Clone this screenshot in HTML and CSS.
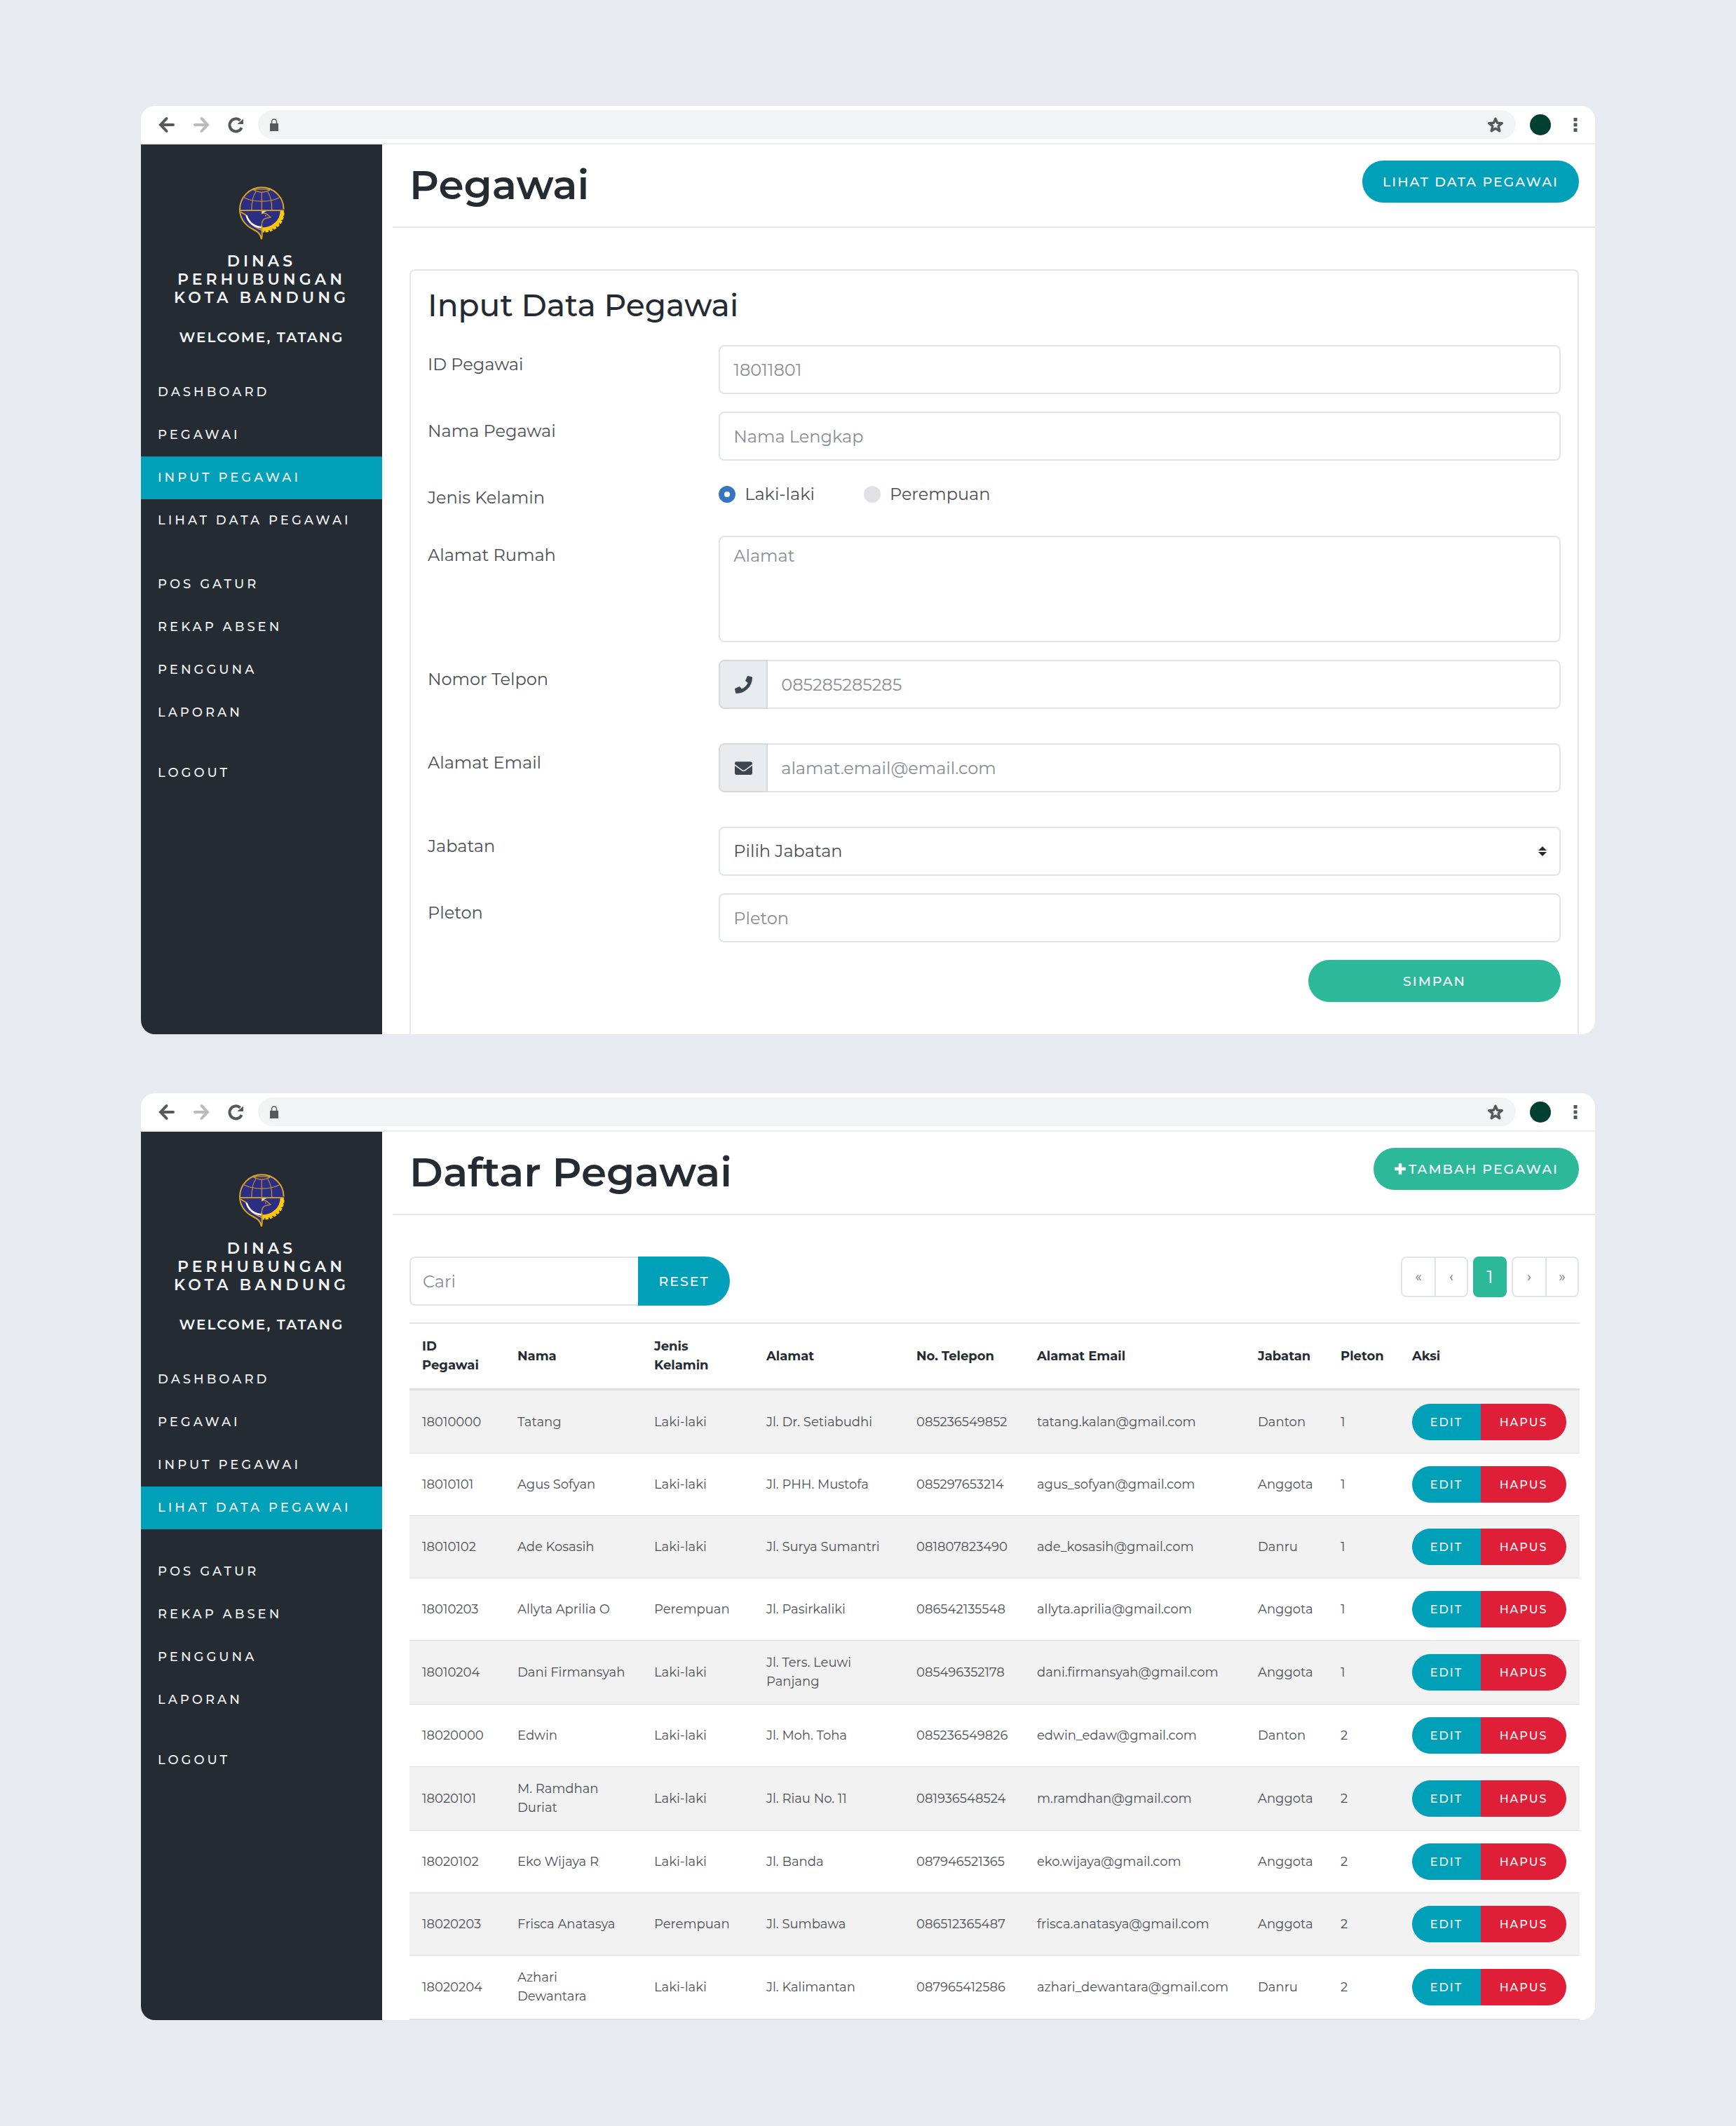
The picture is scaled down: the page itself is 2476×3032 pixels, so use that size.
FILE: index.html
```html
<!DOCTYPE html>
<html lang="id">
<head>
<meta charset="utf-8">
<meta name="viewport" content="width=device-width, initial-scale=1">
<title>Pegawai - Dinas Perhubungan Kota Bandung</title>
<link rel="stylesheet" href="styles.css">
</head>
<body>
<svg class="sprite" aria-hidden="true">
  <symbol id="i-back" viewBox="0 0 24 24"><path d="M21 12H4M11.500 3 3 12l8.500 9" fill="none" stroke="currentColor" stroke-width="4" stroke-linecap="round"/></symbol>
  <symbol id="i-forward" viewBox="0 0 24 24"><path d="M3 12h17M12.500 3 21 12l-8.500 9" fill="none" stroke="currentColor" stroke-width="4" stroke-linecap="round"/></symbol>
  <symbol id="i-reload" viewBox="0 0 24 24"><path d="M20.600 16.200A9 9 0 1 1 18.600 5.800" fill="none" stroke="currentColor" stroke-width="4"/><path d="M23 3.500V11h-8.500z" fill="currentColor"/></symbol>
  <symbol id="i-lock" viewBox="0 0 12 18"><path d="M2.500 8V4.500a3.500 3.500 0 0 1 7 0V8" fill="none" stroke="currentColor" stroke-width="1.500"/><path d="M0 7h12v11H0z" fill="currentColor"/></symbol>
  <symbol id="i-star" viewBox="0 0 24 24"><path d="M12 3.200l2.500 6 6.800.5-5.200 4.200 1.700 6.800-5.800-3.600-5.800 3.600 1.700-6.800L2.700 9.700l6.800-.5z" fill="none" stroke="currentColor" stroke-width="3.400" stroke-linejoin="round"/></symbol>
  <symbol id="i-more" viewBox="0 0 24 24"><path d="M9.500 2h5v5h-5zM9.500 9.500h5v5h-5zM9.500 17h5v5h-5z" fill="currentColor"/></symbol>
  <symbol id="i-phone" viewBox="0 0 512 512"><path fill="currentColor" d="M493.400 24.600l-104-24c-11.300-2.600-22.900 3.300-27.500 13.900l-48 112c-4.200 9.800-1.400 21.300 6.900 28l60.600 49.600c-36 76.700-98.900 140.500-177.200 177.200l-49.600-60.600c-6.800-8.300-18.200-11.100-28-6.900l-112 48C3.900 366.500-2 378.100.6 389.400l24 104C27.100 504.200 36.700 512 48 512c256.100 0 464-207.500 464-464 0-11.200-7.700-20.900-18.600-23.400z"/></symbol>
  <symbol id="i-mail" viewBox="0 0 512 512"><path fill="currentColor" d="M502.300 190.800c3.900-3.100 9.700-.2 9.700 4.700V400c0 26.500-21.500 48-48 48H48c-26.500 0-48-21.500-48-48V195.600c0-5 5.700-7.800 9.700-4.700 22.400 17.400 52.100 39.500 154.100 113.600 21.100 15.400 56.700 47.800 92.200 47.600 35.700.3 72-32.800 92.300-47.600 102-74.100 131.600-96.300 154-113.700zM256 320c23.200.4 56.600-29.200 73.400-41.400 132.700-96.300 142.800-104.700 173.400-128.700 5.800-4.500 9.200-11.500 9.200-18.900v-19c0-26.500-21.500-48-48-48H48c-26.500 0-48 21.500-48 48v19c0 7.400 3.400 14.300 9.200 18.900 30.600 23.900 40.700 32.400 173.400 128.700 16.800 12.200 50.200 41.800 73.400 41.400z"/></symbol>
  <symbol id="i-plus" viewBox="0 0 16 16"><path d="M8 1v14M1 8h14" stroke="currentColor" stroke-width="4" fill="none"/></symbol>
  <symbol id="i-sort" viewBox="0 0 12 16"><path d="M6 1l6 6H0zM6 15l6-6H0z" fill="currentColor"/></symbol>
  <symbol id="logo" viewBox="450 377 195 230">
    <path d="M453 474a94 94 0 0 1 188 0c0 50-40 92-94 92v36c-4-26-18-38-36-46-38-16-58-44-58-82z" fill="#2b2e83"/>
    <path d="M634 480c0 46-38 80-86 80" fill="none" stroke="#fcc80f" stroke-width="16"/>
    <path d="M639 488c-2 46-38 82-88 80" fill="none" stroke="#fcc80f" stroke-width="10" stroke-dasharray="13 5"/>
    <g fill="none" stroke="#c9952f" stroke-width="3.500">
      <path d="M547 401v76M522 399c-12 16-19 44-18 78M572 399c12 16 19 44 18 78M471 424c20 10 47 16 76 16s56-6 76-16M511 391c10 6 22 10 36 10s26-4 36-10c-12-4-60-4-72 0z"/>
    </g>
    <path d="M641 474a94 94 0 0 0-188 0c0 38 22 68 54 84 20 10 34 18 39 44 5-20 1-34 1-60" fill="none" stroke="#daa520" stroke-width="6"/>
    <path d="M453 479h188M458 486l22 13c6 28 26 48 67 64" fill="none" stroke="#daa520" stroke-width="5"/>
    <path d="M482 500c8 30 32 48 65 52" fill="none" stroke="#fff" stroke-width="7"/>
    <path d="M549 482h20c-8 2-14 6-20 10z" fill="#fff"/>
    <path d="M547 480v12c10-2 22 0 28 8l10 8c-6 2-12 2-18 4-14 2-20 12-20 32v20" fill="none" stroke="#c9952f" stroke-width="4"/>
    <circle cx="564" cy="502" r="3" fill="#8f93d8"/>
  </symbol>
</svg>

<section class="window" aria-label="Input Pegawai">
  <div class="chrome">
    <div class="chrome-nav">
      <button type="button" class="icon-btn" aria-label="Kembali"><svg class="icon"><use href="#i-back"/></svg></button>
      <button type="button" class="icon-btn icon-btn-off" aria-label="Maju"><svg class="icon"><use href="#i-forward"/></svg></button>
      <button type="button" class="icon-btn" aria-label="Muat ulang"><svg class="icon"><use href="#i-reload"/></svg></button>
    </div>
    <div class="address">
      <svg class="icon-lock"><use href="#i-lock"/></svg>
      <input class="address-input" type="text" aria-label="Alamat situs">
      <button type="button" class="icon-btn" aria-label="Tandai"><svg class="icon"><use href="#i-star"/></svg></button>
    </div>
    <span class="avatar"></span>
    <button type="button" class="icon-btn" aria-label="Menu"><svg class="icon"><use href="#i-more"/></svg></button>
  </div>
  <div class="app">
    <aside class="sidebar">
      <svg class="logo"><use href="#logo"/></svg>
      <p class="brand">DINAS<br>PERHUBUNGAN<br>KOTA BANDUNG</p>
      <p class="welcome">WELCOME, TATANG</p>
      <nav>
        <ul class="menu">
          <li><a href="#">DASHBOARD</a></li>
          <li><a href="#">PEGAWAI</a></li>
          <li><a href="#" class="active">INPUT PEGAWAI</a></li>
          <li><a href="#">LIHAT DATA PEGAWAI</a></li>
        </ul>
        <ul class="menu">
          <li><a href="#">POS GATUR</a></li>
          <li><a href="#">REKAP ABSEN</a></li>
          <li><a href="#">PENGGUNA</a></li>
          <li><a href="#">LAPORAN</a></li>
        </ul>
        <ul class="menu menu-end">
          <li><a href="#">LOGOUT</a></li>
        </ul>
      </nav>
    </aside>
    <main class="main">
      <header class="page-head">
        <h1>Pegawai</h1>
        <a href="#daftar" class="btn btn-info">LIHAT DATA PEGAWAI</a>
      </header>
      <div class="content">
        <form class="card">
          <h2>Input Data Pegawai</h2>
          <div class="row">
            <label for="id">ID Pegawai</label>
            <input class="field" id="id" type="text" placeholder="18011801">
          </div>
          <div class="row">
            <label for="nama">Nama Pegawai</label>
            <input class="field" id="nama" type="text" placeholder="Nama Lengkap">
          </div>
          <div class="row" role="radiogroup" aria-labelledby="jk">
            <span class="row-label" id="jk">Jenis Kelamin</span>
            <div class="radios">
              <label class="radio"><input type="radio" name="jk" checked>Laki-laki</label>
              <label class="radio"><input type="radio" name="jk">Perempuan</label>
            </div>
          </div>
          <div class="row">
            <label for="alamat">Alamat Rumah</label>
            <textarea class="field field-area" id="alamat" placeholder="Alamat"></textarea>
          </div>
          <div class="row row-group">
            <label for="telp">Nomor Telpon</label>
            <div class="group">
              <span class="addon"><svg class="icon-field"><use href="#i-phone"/></svg></span>
              <input class="field" id="telp" type="tel" placeholder="085285285285">
            </div>
          </div>
          <div class="row row-group">
            <label for="email">Alamat Email</label>
            <div class="group">
              <span class="addon"><svg class="icon-field"><use href="#i-mail"/></svg></span>
              <input class="field" id="email" type="email" placeholder="alamat.email@email.com">
            </div>
          </div>
          <div class="row">
            <label for="jabatan">Jabatan</label>
            <div class="select">
              <select class="field" id="jabatan">
                <option>Pilih Jabatan</option>
                <option>Danton</option>
                <option>Danru</option>
                <option>Anggota</option>
              </select>
              <svg class="icon-sort"><use href="#i-sort"/></svg>
            </div>
          </div>
          <div class="row">
            <label for="pleton">Pleton</label>
            <input class="field" id="pleton" type="text" placeholder="Pleton">
          </div>
          <button type="submit" class="btn btn-success btn-save">SIMPAN</button>
        </form>
      </div>
    </main>
  </div>
</section>

<section class="window" id="daftar" aria-label="Daftar Pegawai">
  <div class="chrome">
    <div class="chrome-nav">
      <button type="button" class="icon-btn" aria-label="Kembali"><svg class="icon"><use href="#i-back"/></svg></button>
      <button type="button" class="icon-btn icon-btn-off" aria-label="Maju"><svg class="icon"><use href="#i-forward"/></svg></button>
      <button type="button" class="icon-btn" aria-label="Muat ulang"><svg class="icon"><use href="#i-reload"/></svg></button>
    </div>
    <div class="address">
      <svg class="icon-lock"><use href="#i-lock"/></svg>
      <input class="address-input" type="text" aria-label="Alamat situs">
      <button type="button" class="icon-btn" aria-label="Tandai"><svg class="icon"><use href="#i-star"/></svg></button>
    </div>
    <span class="avatar"></span>
    <button type="button" class="icon-btn" aria-label="Menu"><svg class="icon"><use href="#i-more"/></svg></button>
  </div>
  <div class="app">
    <aside class="sidebar">
      <svg class="logo"><use href="#logo"/></svg>
      <p class="brand">DINAS<br>PERHUBUNGAN<br>KOTA BANDUNG</p>
      <p class="welcome">WELCOME, TATANG</p>
      <nav>
        <ul class="menu">
          <li><a href="#">DASHBOARD</a></li>
          <li><a href="#">PEGAWAI</a></li>
          <li><a href="#">INPUT PEGAWAI</a></li>
          <li><a href="#" class="active">LIHAT DATA PEGAWAI</a></li>
        </ul>
        <ul class="menu">
          <li><a href="#">POS GATUR</a></li>
          <li><a href="#">REKAP ABSEN</a></li>
          <li><a href="#">PENGGUNA</a></li>
          <li><a href="#">LAPORAN</a></li>
        </ul>
        <ul class="menu menu-end">
          <li><a href="#">LOGOUT</a></li>
        </ul>
      </nav>
    </aside>
    <main class="main">
      <header class="page-head">
        <h1>Daftar Pegawai</h1>
        <a href="#" class="btn btn-success"><svg class="icon-plus"><use href="#i-plus"/></svg>TAMBAH PEGAWAI</a>
      </header>
      <div class="content">
        <div class="tools">
          <form class="search">
            <input class="field" type="search" placeholder="Cari" aria-label="Cari">
            <button type="reset" class="btn btn-info btn-reset">RESET</button>
          </form>
          <nav class="pages" aria-label="Halaman">
            <div class="page-set"><a href="#">«</a><a href="#">‹</a></div>
            <a href="#" class="page-now" aria-current="page">1</a>
            <div class="page-set"><a href="#">›</a><a href="#">»</a></div>
          </nav>
        </div>
        <table>
          <colgroup>
            <col class="c-id"><col class="c-nama"><col class="c-jk"><col class="c-alamat"><col class="c-telp"><col class="c-email"><col class="c-jabatan"><col class="c-pleton"><col class="c-aksi">
          </colgroup>
          <thead>
            <tr><th>ID<br>Pegawai</th><th>Nama</th><th>Jenis<br>Kelamin</th><th>Alamat</th><th>No. Telepon</th><th>Alamat Email</th><th>Jabatan</th><th>Pleton</th><th>Aksi</th></tr>
          </thead>
          <tbody>
            <tr><td>18010000</td><td>Tatang</td><td>Laki-laki</td><td>Jl. Dr. Setiabudhi</td><td>085236549852</td><td>tatang.kalan@gmail.com</td><td>Danton</td><td>1</td><td><div class="actions"><button type="button" class="edit">EDIT</button><button type="button" class="delete">HAPUS</button></div></td></tr>
            <tr><td>18010101</td><td>Agus Sofyan</td><td>Laki-laki</td><td>Jl. PHH. Mustofa</td><td>085297653214</td><td>agus_sofyan@gmail.com</td><td>Anggota</td><td>1</td><td><div class="actions"><button type="button" class="edit">EDIT</button><button type="button" class="delete">HAPUS</button></div></td></tr>
            <tr><td>18010102</td><td>Ade Kosasih</td><td>Laki-laki</td><td>Jl. Surya Sumantri</td><td>081807823490</td><td>ade_kosasih@gmail.com</td><td>Danru</td><td>1</td><td><div class="actions"><button type="button" class="edit">EDIT</button><button type="button" class="delete">HAPUS</button></div></td></tr>
            <tr><td>18010203</td><td>Allyta Aprilia O</td><td>Perempuan</td><td>Jl. Pasirkaliki</td><td>086542135548</td><td>allyta.aprilia@gmail.com</td><td>Anggota</td><td>1</td><td><div class="actions"><button type="button" class="edit">EDIT</button><button type="button" class="delete">HAPUS</button></div></td></tr>
            <tr><td>18010204</td><td>Dani Firmansyah</td><td>Laki-laki</td><td>Jl. Ters. Leuwi<br>Panjang</td><td>085496352178</td><td>dani.firmansyah@gmail.com</td><td>Anggota</td><td>1</td><td><div class="actions"><button type="button" class="edit">EDIT</button><button type="button" class="delete">HAPUS</button></div></td></tr>
            <tr><td>18020000</td><td>Edwin</td><td>Laki-laki</td><td>Jl. Moh. Toha</td><td>085236549826</td><td>edwin_edaw@gmail.com</td><td>Danton</td><td>2</td><td><div class="actions"><button type="button" class="edit">EDIT</button><button type="button" class="delete">HAPUS</button></div></td></tr>
            <tr><td>18020101</td><td>M. Ramdhan<br>Duriat</td><td>Laki-laki</td><td>Jl. Riau No. 11</td><td>081936548524</td><td>m.ramdhan@gmail.com</td><td>Anggota</td><td>2</td><td><div class="actions"><button type="button" class="edit">EDIT</button><button type="button" class="delete">HAPUS</button></div></td></tr>
            <tr><td>18020102</td><td>Eko Wijaya R</td><td>Laki-laki</td><td>Jl. Banda</td><td>087946521365</td><td>eko.wijaya@gmail.com</td><td>Anggota</td><td>2</td><td><div class="actions"><button type="button" class="edit">EDIT</button><button type="button" class="delete">HAPUS</button></div></td></tr>
            <tr><td>18020203</td><td>Frisca Anatasya</td><td>Perempuan</td><td>Jl. Sumbawa</td><td>086512365487</td><td>frisca.anatasya@gmail.com</td><td>Anggota</td><td>2</td><td><div class="actions"><button type="button" class="edit">EDIT</button><button type="button" class="delete">HAPUS</button></div></td></tr>
            <tr><td>18020204</td><td>Azhari<br>Dewantara</td><td>Laki-laki</td><td>Jl. Kalimantan</td><td>087965412586</td><td>azhari_dewantara@gmail.com</td><td>Danru</td><td>2</td><td><div class="actions"><button type="button" class="edit">EDIT</button><button type="button" class="delete">HAPUS</button></div></td></tr>
          </tbody>
        </table>
      </div>
    </main>
  </div>
</section>
</body>
</html>
```
FILE: styles.css
```css
* { box-sizing: border-box; }

body {
  margin: 0;
  padding: 151px 201px;
  display: flex;
  flex-direction: column;
  gap: 84px;
  background: #e6ebf2;
  color: #4a5056;
  font-family: Montserrat, Inter, "Liberation Sans", sans-serif;
  font-size: 24px;
  font-weight: 400;
}

h1, h2, p, ul { margin: 0; padding: 0; }
ul { list-style: none; }
a { color: inherit; text-decoration: none; }
button, input, select, textarea { font: inherit; margin: 0; }
button { border: 0; padding: 0; cursor: pointer; }

.sprite { display: none; }

.window {
  border-radius: 20px;
  overflow: hidden;
  background: #fff;
}

/* Browser bar */
.chrome {
  display: flex;
  align-items: center;
  gap: 20px;
  padding: 6px 16px 6px 25px;
  border-bottom: 2px solid #ebecee;
}
.chrome-nav { display: flex; gap: 25px; }
.icon-btn { display: flex; background: none; color: #55595e; }
.icon-btn-off { color: #b9bcbf; }
.icon { width: 24px; height: 24px; }
.address {
  flex: 1;
  display: flex;
  align-items: center;
  height: 41px;
  padding: 0 17px;
  border-radius: 21px;
  background: #f1f3f4;
}
.icon-lock { width: 12px; height: 18px; color: #55595e; }
.address-input {
  flex: 1;
  min-width: 0;
  padding: 0 12px;
  border: 0;
  background: none;
  font-size: 20px;
}
.avatar {
  width: 30px;
  height: 30px;
  margin-right: 3px;
  border-radius: 50%;
  background: #00402e;
}

/* Sidebar */
.app { display: flex; }
.sidebar {
  width: 344px;
  flex: none;
  padding-top: 60px;
  background: #252b33;
  color: #f4f5f6;
}
.logo { display: block; width: 65px; height: 77px; margin: 0 auto 17px; }
.brand, .welcome { text-align: center; line-height: 26px; font-weight: 600; }
.brand { font-size: 22px; letter-spacing: 5px; }
.welcome { margin: 30px 0 35px; font-size: 20px; letter-spacing: 2px; }
.menu { margin-bottom: 30px; font-size: 18px; font-weight: 500; letter-spacing: 4px; }
.menu a { display: block; padding-left: 24px; line-height: 61px; white-space: nowrap; }
.menu-end { margin-top: -5px; }
.active { background: #00a0b8; }

/* Page */
.main { flex: 1; min-width: 0; padding-left: 15px; }
.page-head {
  display: flex;
  justify-content: space-between;
  align-items: flex-start;
  padding: 23px 23px 24px 24px;
  border-bottom: 2px solid #e4e6e8;
  color: #242b33;
}
h1 { font-size: 58px; line-height: 70px; font-weight: 600; }
.content { padding: 59px 23px 0 24px; }

.btn {
  display: flex;
  align-items: center;
  justify-content: center;
  height: 60px;
  padding: 0 29px;
  border-radius: 30px;
  color: #fff;
  font-size: 19px;
  font-weight: 500;
  letter-spacing: 2px;
}
.btn-info { background: #00a0b8; }
.btn-success { background: #2cb999; }
.icon-plus { width: 18px; height: 18px; margin-right: 3px; }

/* Form */
.card {
  display: flex;
  flex-direction: column;
  gap: 25px;
  padding: 22px 24px 46px;
  border: 2px solid #e4e6e8;
  border-bottom: 0;
  border-radius: 8px 8px 0 0;
}
h2 {
  margin-bottom: 5px;
  color: #242b33;
  font-size: 44px;
  line-height: 54px;
  font-weight: 500;
}
.row {
  display: grid;
  grid-template-columns: 1fr 3fr;
  gap: 15px;
  align-items: start;
  line-height: 36px;
}
.row > label, .row-label { padding-top: 10px; }
.row-group { margin-bottom: 24px; }
.field {
  display: block;
  width: 100%;
  height: 70px;
  padding: 0 19px;
  border: 2px solid #e2e5e8;
  border-radius: 8px;
  background: #fff;
  color: #4a5056;
  appearance: none;
}
.field::placeholder { color: #858d95; opacity: 1; }
.field-area { height: 152px; padding: 9px 19px; resize: none; }

.radios { display: flex; gap: 70px; height: 57px; }
.radio { display: flex; align-items: center; gap: 13px; height: 46px; }
.radio input {
  width: 24px;
  height: 24px;
  border-radius: 50%;
  background: #dee2e6;
  appearance: none;
}
.radio input:checked { border: 8px solid #3775bf; background: #fff; }

.group { display: flex; }
.group .field { flex: 1; min-width: 0; border-left: 0; border-radius: 0 8px 8px 0; }
.addon {
  display: flex;
  align-items: center;
  justify-content: center;
  width: 70px;
  height: 70px;
  border: 2px solid #d5dade;
  border-radius: 8px 0 0 8px;
  background: #e9ecef;
  color: #3d464e;
}
.icon-field { width: 25px; height: 25px; }
.select { position: relative; }
.icon-sort {
  position: absolute;
  top: 27px;
  right: 20px;
  width: 12px;
  height: 16px;
  color: #242b33;
  pointer-events: none;
}
.btn-save { align-self: flex-end; width: 360px; }

/* Search and paging */
.tools { display: flex; justify-content: space-between; align-items: flex-start; margin-bottom: 24px; }
.search { display: flex; }
.search .field { width: 326px; padding: 0 17px; border-right: 0; border-radius: 8px 0 0 8px; }
.btn-reset { width: 131px; height: 70px; border-radius: 0 35px 35px 0; }
.pages { display: flex; gap: 7px; font-size: 20px; color: #6c757d; }
.page-set { display: flex; border: 2px solid #e2e5e8; border-radius: 8px; }
.page-set a { width: 46px; text-align: center; line-height: 54px; }
.page-set a + a { border-left: 2px solid #e2e5e8; }
.page-now {
  width: 48px;
  border-radius: 8px;
  background: #2cb999;
  color: #fff;
  font-size: 26px;
  line-height: 58px;
  text-align: center;
}

/* Table */
table {
  width: 100%;
  table-layout: fixed;
  border-collapse: separate;
  border-spacing: 0;
  border-bottom: 2px solid #e0e3e6;
  font-size: 18px;
  line-height: 27px;
}
.c-id { width: 136px; }
.c-nama { width: 195px; }
.c-jk { width: 160px; }
.c-alamat { width: 214px; }
.c-telp { width: 172px; }
.c-email { width: 315px; }
.c-jabatan { width: 118px; }
.c-pleton { width: 102px; }
.c-aksi { width: 257px; }
th {
  padding: 19px 18px;
  border-top: 2px solid #e4e6e8;
  border-bottom: 3px solid #dcdfe1;
  color: #242b33;
  font-weight: 700;
  text-align: left;
  white-space: nowrap;
}
td { padding: 18px; border-top: 1px solid #dcdfe1; white-space: nowrap; }
tbody tr:first-child td { border-top-color: #f2f2f2; }
tbody tr:nth-child(odd) { background: #f2f2f2; }
.actions { display: flex; }
.actions button {
  height: 52px;
  color: #fff;
  font-size: 16px;
  font-weight: 500;
  letter-spacing: 2px;
}
.actions .edit { width: 98px; border-radius: 26px 0 0 26px; background: #00a0b8; }
.actions .delete { width: 122px; border-radius: 0 26px 26px 0; background: #df1f37; }
```
